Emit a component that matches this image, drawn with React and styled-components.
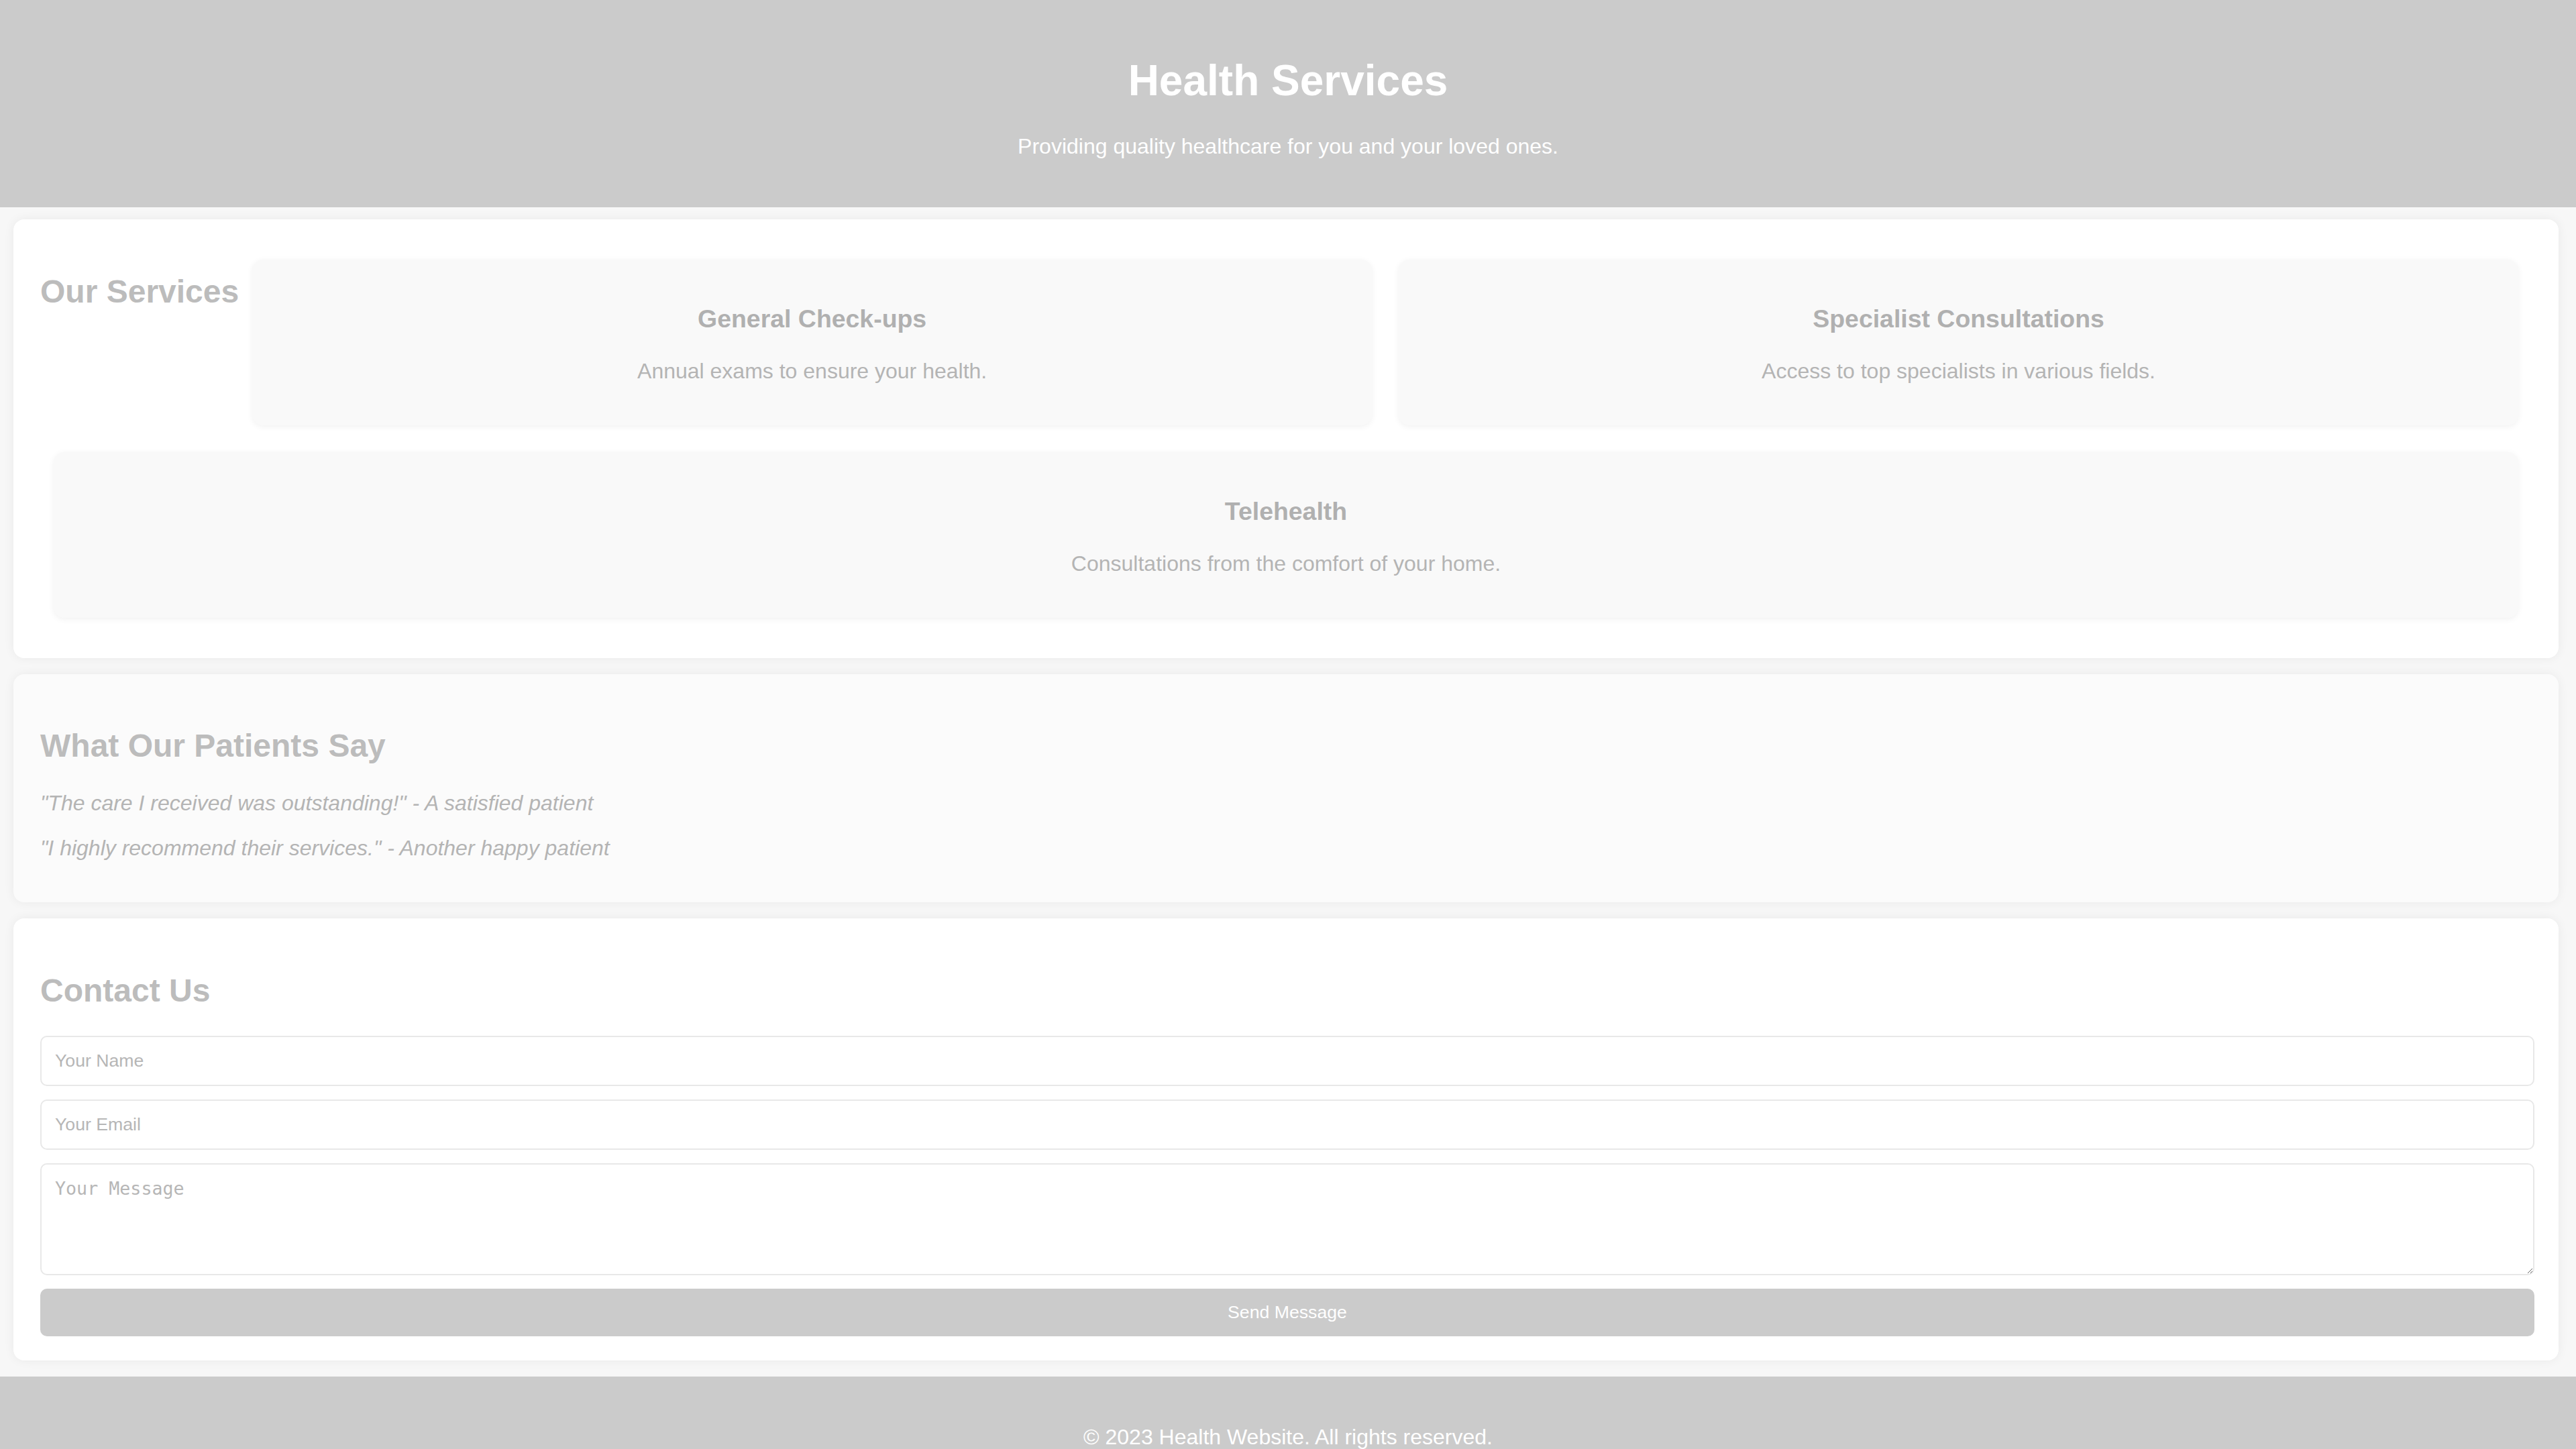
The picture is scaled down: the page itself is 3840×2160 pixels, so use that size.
import React from 'react';
import styled, {createGlobalStyle} from "styled-components";

const GlobalStyle = createGlobalStyle`
  html, body {
    margin: 0;
    padding: 0;
    background: #f7f7f7;
  }

  body {
    font-family: "Liberation Sans", Arial, sans-serif;
    color: #bdbdbd;
  }
`

const Header = styled.header`
  background-color: #cbcbcb;
  color: #fff;
  text-align: center;
  padding: 40px;

  h1 {
    font-size: 64px;
    margin: 42.88px 0;
  }

  p {
    font-size: 32px;
    margin: 32px 0;
  }
`

const Main = styled.main`
  display: flex;
  flex-direction: column;
  gap: 24px;
  padding: 18px 26px 24px 20px;
`

const Section = styled.section`
  background-color: ${props => props.$tint ? '#fbfbfb' : '#fff'};
  border-radius: 16px;
  box-shadow: 0 0 16px rgba(0, 0, 0, 0.06);
  padding: 40px 40px ${props => props.$bottom || '40px'};
`

const ServicesSection = styled(Section)`
  display: flex;
  flex-wrap: wrap;
  align-items: flex-start;
`

const SectionTitle = styled.h2`
  font-size: 48px;
  font-weight: bold;
  margin: 39.84px 0;
  color: #bcbcbc;
`

const ServiceCard = styled.div`
  flex: 1 1 1200px;
  margin: 20px;
  padding: 30px;
  background-color: #f9f9f9;
  border-radius: 16px;
  box-shadow: 0 2px 10px rgba(0, 0, 0, 0.06);
  text-align: center;

  h3 {
    font-size: 37.44px;
    margin: 37.44px 0;
    color: #b0b0b0;
  }

  p {
    font-size: 32px;
    margin: 32px 0;
    color: #b4b4b4;
  }
`

const Quote = styled.p`
  font-size: 32px;
  font-style: italic;
  margin: 30px 0;
  color: #b4b4b4;
`

const Form = styled.form`
  display: flex;
  flex-direction: column;
  align-items: flex-start;
`

const Field = styled.input`
  width: calc(100% - 40px);
  padding: 20px;
  margin: 0 0 20px;
  border: 2px solid #e8e8e8;
  border-radius: 10px;
  background: #fff;
  font-family: "Liberation Sans", Arial, sans-serif;
  font-size: 26.67px;
  color: #999;
  outline: none;

  &::placeholder {
    color: #b6b6b6;
  }
`

const MessageBox = styled(Field).attrs({as: 'textarea'})`
  height: 123px;
  resize: vertical;
  font-family: "DejaVu Sans Mono", "Liberation Mono", monospace;
`

const SendButton = styled.button`
  width: calc(100% + 4px);
  padding: 20px;
  border: none;
  border-radius: 10px;
  background-color: #cbcbcb;
  color: #fff;
  font-family: "Liberation Sans", Arial, sans-serif;
  font-size: 26.67px;
  cursor: pointer;
`

const Footer = styled.footer`
  background-color: #cbcbcb;
  color: #fff;
  text-align: center;
  padding: 40px;

  p {
    font-size: 32px;
    margin: 32px 0;
  }
`

const services = [
    {title: 'General Check-ups', text: 'Annual exams to ensure your health.'},
    {title: 'Specialist Consultations', text: 'Access to top specialists in various fields.'},
    {title: 'Telehealth', text: 'Consultations from the comfort of your home.'},
];

const testimonials = [
    '"The care I received was outstanding!" - A satisfied patient',
    '"I highly recommend their services." - Another happy patient',
];

const App = () => {
    return (
        <>
            <GlobalStyle/>
            <Header>
                <h1>Health Services</h1>
                <p>Providing quality healthcare for you and your loved ones.</p>
            </Header>
            <Main>
                <ServicesSection>
                    <SectionTitle>Our Services</SectionTitle>
                    {services.map(item => (
                        <ServiceCard key={item.title}>
                            <h3>{item.title}</h3>
                            <p>{item.text}</p>
                        </ServiceCard>
                    ))}
                </ServicesSection>
                <Section $tint $bottom="32px">
                    <SectionTitle>What Our Patients Say</SectionTitle>
                    {testimonials.map(quote => <Quote key={quote}>{quote}</Quote>)}
                </Section>
                <Section $bottom="36px">
                    <SectionTitle>Contact Us</SectionTitle>
                    <Form onSubmit={e => e.preventDefault()}>
                        <Field type="text" placeholder="Your Name"/>
                        <Field type="email" placeholder="Your Email"/>
                        <MessageBox placeholder="Your Message"/>
                        <SendButton type="submit">Send Message</SendButton>
                    </Form>
                </Section>
            </Main>
            <Footer>
                <p>&copy; 2023 Health Website. All rights reserved.</p>
            </Footer>
        </>
    );
}

export default App;
